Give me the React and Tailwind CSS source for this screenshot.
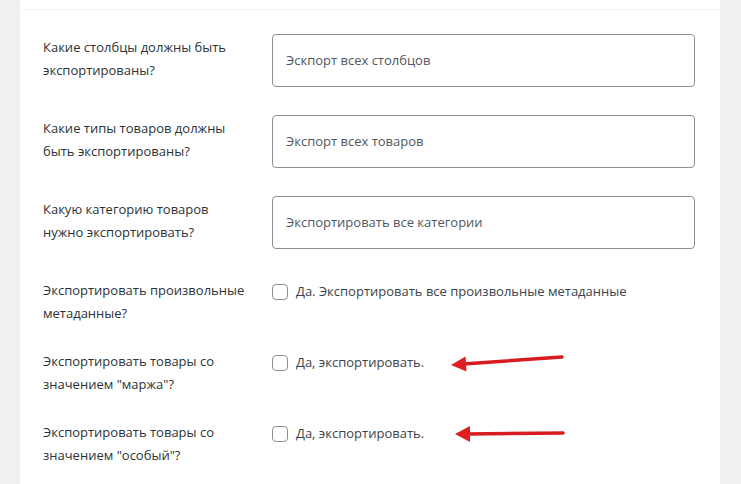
import React from 'react'

const font = { fontFamily: '"Open Sans", "Noto Sans", sans-serif' }

function Arrow({ variant }) {
  if (variant === 'slope') {
    return (
      <svg width="116" height="24" viewBox="0 0 116 24" className="ml-[25px] shrink-0">
        <line x1="113" y1="6" x2="14" y2="13" stroke="#d81b1f" strokeWidth="3.5" strokeLinecap="round" />
        <polygon points="2,14 17.5,20.5 16.5,5.5" fill="#e01e22" />
      </svg>
    )
  }
  return (
    <svg width="114" height="24" viewBox="0 0 114 24" className="ml-[29px] shrink-0">
      <line x1="110" y1="11" x2="14" y2="12" stroke="#d81b1f" strokeWidth="3.5" strokeLinecap="round" />
      <polygon points="2,12 17,4 17,20" fill="#e01e22" />
    </svg>
  )
}

function Label({ children }) {
  return (
    <div className="w-[229px] shrink-0 whitespace-nowrap text-[13px] leading-[23px] text-[#2c3338]">{children}</div>
  )
}

function InputRow({ label, value }) {
  return (
    <div className="flex items-start">
      <div className="mt-[2px]">
        <Label>{label}</Label>
      </div>
      <div className="flex-1 h-[53px] rounded-[4px] border border-[#8c8f94] bg-white flex items-center px-[13px] text-[13px] text-[#50575e]">
        {value}
      </div>
    </div>
  )
}

function CheckRow({ label, text, arrow }) {
  return (
    <div className="flex items-start">
      <Label>{label}</Label>
      <div className="flex-1 flex items-center h-[23px] mt-[1px]">
        <span className="w-4 h-4 rounded-[4px] border border-[#8c8f94] bg-white shrink-0" />
        <span className="ml-2 text-[13px] text-[#3c434a]">{text}</span>
        {arrow && <Arrow variant={arrow} />}
      </div>
    </div>
  )
}

export default function App() {
  return (
    <div className="flex w-[741px] h-[484px] bg-[#f0f0f1] overflow-hidden" style={font}>
      <div className="w-5 shrink-0" />
      <div className="flex-1 bg-white">
        <div className="h-[10px] ml-[2px] border-b border-[#f0f0f1]" />
        <div className="pt-[24px] pl-[23px] pr-[25px]">
          <div className="flex flex-col gap-[28px]">
            <InputRow label={<>Какие столбцы должны быть<br />экспортированы?</>} value="Эскпорт всех столбцов" />
            <InputRow label={<>Какие типы товаров должны<br />быть экспортированы?</>} value="Экспорт всех товаров" />
            <InputRow label={<>Какую категорию товаров<br />нужно экспортировать?</>} value="Экспортировать все категории" />
          </div>
          <div className="flex flex-col gap-[25px] mt-[30px]">
            <CheckRow label={<>Экспортировать произвольные<br />метаданные?</>} text="Да. Экспортировать все произвольные метаданные" />
            <CheckRow label={<>Экспортировать товары со<br />значением "маржа"?</>} text="Да, экспортировать." arrow="slope" />
            <CheckRow label={<>Экспортировать товары со<br />значением "особый"?</>} text="Да, экспортировать." arrow="flat" />
          </div>
        </div>
      </div>
      <div className="w-[21px] shrink-0" />
    </div>
  )
}
